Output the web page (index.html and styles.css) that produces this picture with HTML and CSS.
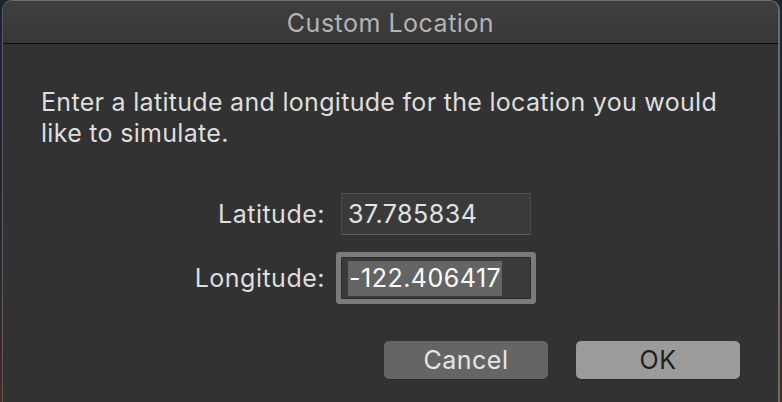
FILE: index.html
```html
<!DOCTYPE html>
<html>
<head>
<meta charset="utf-8">
<link rel="stylesheet" href="styles.css">
</head>
<body>
<div class="desk">
  <div class="window">
    <div class="titlebar">Custom Location</div>
    <div class="content">
      <p class="msg">Enter a latitude and longitude for the location you would like to simulate.</p>
      <div class="form">
        <label class="lbl">Latitude:</label>
        <div class="field">37.785834</div>
        <label class="lbl">Longitude:</label>
        <div class="field focused"><span class="sel">-122.406417</span></div>
      </div>
      <div class="buttons">
        <button class="btn cancel">Cancel</button>
        <button class="btn ok">OK</button>
      </div>
    </div>
  </div>
</div>
</body>
</html>
```
FILE: styles.css
```css
* { box-sizing: border-box; }
html, body { margin: 0; padding: 0; }
body {
  width: 782px;
  height: 402px;
  overflow: hidden;
  background: linear-gradient(180deg, #1c2633 0%, #232a36 60%, #4a2a22 100%);
  font-family: Inter, "Noto Sans", sans-serif;
  letter-spacing: 0.5px;
}
.desk {
  display: flex;
  height: 402px;
  padding-left: 2px;
}
.window {
  width: 778px;
  height: 402px;
  background: #323232;
  border-radius: 10px 10px 0 0;
  border-left: 1px solid #5a5a5a;
  border-right: 2px solid #6a6a6a;
  border-top: 1px solid #6e6e6e;
  overflow: hidden;
  display: flex;
  flex-direction: column;
}
.titlebar {
  height: 43px;
  flex: none;
  background: linear-gradient(180deg, #3f3f3f 0%, #383838 100%);
  border-bottom: 1px solid #0a0a0a;
  color: #b3b3b3;
  font-size: 25px;
  display: flex;
  align-items: center;
  justify-content: center;
  padding-top: 1px;
}
.content {
  padding: 43px 38px 0 38px;
  display: flex;
  flex-direction: column;
}
.msg {
  margin: 0;
  color: #dedede;
  font-size: 25px;
  line-height: 31px;
  letter-spacing: 0.3px;
}
.form {
  display: grid;
  grid-template-columns: 284px 190px;
  column-gap: 16px;
  row-gap: 22px;
  align-items: center;
  margin-top: 44px;
}
.lbl {
  text-align: right;
  color: #dedede;
  font-size: 25px;
}
.field {
  height: 42px;
  background: #3a3a3a;
  border: 1px solid #4a4a4a;
  border-top-color: #555;
  border-bottom-color: #5c5c5c;
  color: #e2e2e2;
  font-size: 25px;
  display: flex;
  align-items: center;
  padding-left: 6px;
}
.field.focused {
  border: 1px solid #2a2a2a;
  box-shadow: 0 0 0 5px #7b7b7b;
  border-radius: 1px;
  background: #3a3a3a;
}
.sel {
  background: #646464;
  color: #ffffff;
  padding: 0 1px;
  line-height: 35px;
}
.buttons {
  display: flex;
  justify-content: flex-end;
  gap: 28px;
  margin-top: 42px;
  padding-right: 0;
}
.btn {
  width: 164px;
  height: 38px;
  border: none;
  border-radius: 5px;
  font-family: Inter, "Noto Sans", sans-serif;
  font-size: 25px;
  letter-spacing: 0.5px;
  padding: 0;
}
.cancel {
  background: #656565;
  color: #e6e6e6;
  box-shadow: 0 1px 0 #2a2a2a;
}
.ok {
  background: #9b9b9b;
  color: #1e1e1e;
  box-shadow: 0 1px 0 #2a2a2a;
}
```
